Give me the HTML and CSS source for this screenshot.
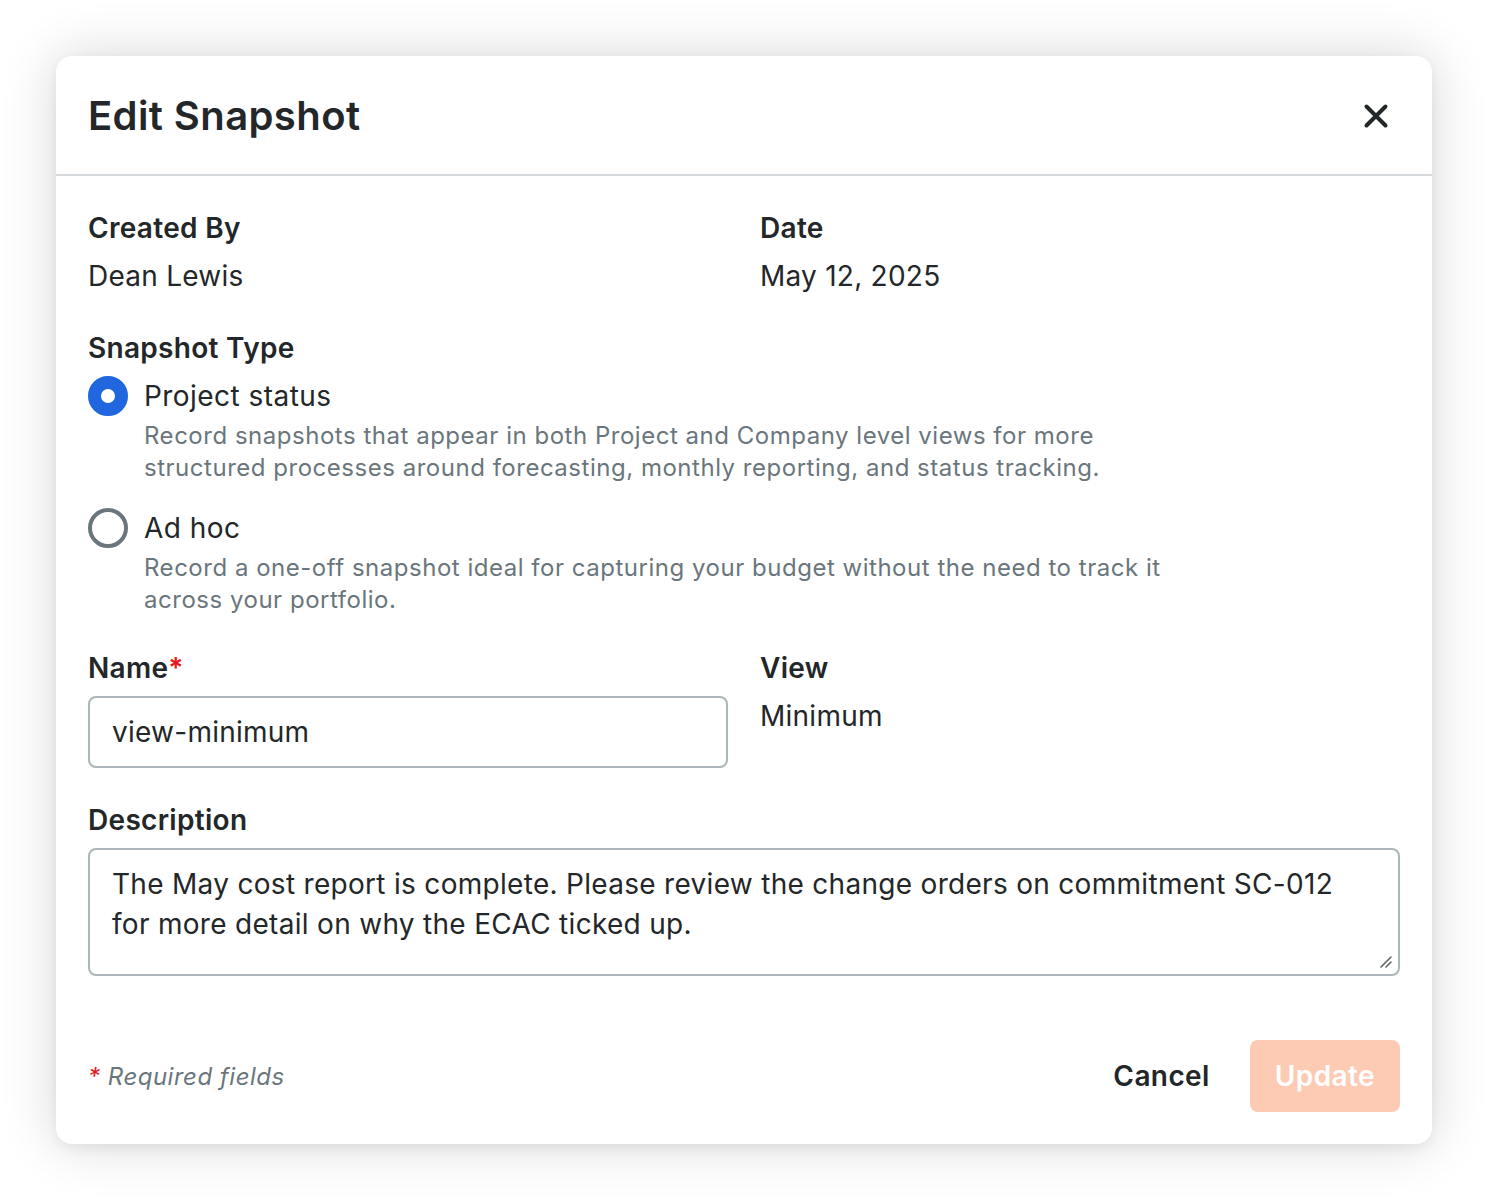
FILE: index.html
```html
<!DOCTYPE html>
<html lang="en">
<head>
<meta charset="utf-8">
<title>Edit Snapshot</title>
<link rel="stylesheet" href="styles.css">
</head>
<body>
<div class="modal">
  <header class="modal-header">
    <h1 class="modal-title">Edit Snapshot</h1>
    <button class="close-btn" aria-label="Close">
      <svg width="26" height="26" viewBox="0 0 26 26"><path d="M3.5 3.5 L22.5 22.5 M22.5 3.5 L3.5 22.5" stroke="#232729" stroke-width="4" stroke-linecap="round" fill="none"/></svg>
    </button>
  </header>
  <div class="modal-body">
    <div class="grid-2">
      <div class="field">
        <div class="label">Created By</div>
        <div class="value">Dean Lewis</div>
      </div>
      <div class="field">
        <div class="label">Date</div>
        <div class="value">May 12, 2025</div>
      </div>
    </div>

    <div class="field section">
      <div class="label">Snapshot Type</div>
      <div class="radio-group">
        <div class="radio-option">
          <span class="radio checked"></span>
          <div class="radio-text">
            <div class="radio-label">Project status</div>
            <div class="radio-desc">Record snapshots that appear in both Project and Company level views for more structured processes around forecasting, monthly reporting, and status tracking.</div>
          </div>
        </div>
        <div class="radio-option">
          <span class="radio"></span>
          <div class="radio-text">
            <div class="radio-label">Ad hoc</div>
            <div class="radio-desc">Record a one-off snapshot ideal for capturing your budget without the need to track it across your portfolio.</div>
          </div>
        </div>
      </div>
    </div>

    <div class="grid-2 section">
      <div class="field">
        <div class="label">Name<span class="req">*</span></div>
        <div class="input">view-minimum</div>
      </div>
      <div class="field">
        <div class="label">View</div>
        <div class="value">Minimum</div>
      </div>
    </div>

    <div class="field section">
      <div class="label">Description</div>
      <div class="textarea">The May cost report is complete. Please review the change orders on commitment SC-012 for more detail on why the ECAC ticked up.
        <svg class="resize" width="14" height="14" viewBox="0 0 14 14"><path d="M13 3 L3 13 M13 8 L8 13" stroke="#5c666b" stroke-width="1.6" stroke-linecap="round"/></svg>
      </div>
    </div>
  </div>
  <footer class="modal-footer">
    <div class="required-note"><span class="req">*</span> Required fields</div>
    <div class="actions">
      <button class="btn btn-cancel">Cancel</button>
      <button class="btn btn-update">Update</button>
    </div>
  </footer>
</div>
</body>
</html>
```

FILE: styles.css
```css
* { box-sizing: border-box; }
html, body { margin: 0; padding: 0; background: #ffffff; }
body {
  font-family: Inter, "Noto Sans", "Liberation Sans", sans-serif;
  color: #232729;
  padding: 56px;
}
.modal {
  width: 1376px;
  height: 1088px;
  background: #fff;
  border-radius: 16px;
  box-shadow: 0 0 56px rgba(0, 0, 0, 0.16), 0 4px 12px rgba(0, 0, 0, 0.06);
  display: flex;
  flex-direction: column;
}
.modal-header {
  height: 120px;
  padding: 2px 32px 0;
  display: flex;
  align-items: center;
  justify-content: space-between;
  border-bottom: 2px solid #d6dadc;
}
.modal-title {
  margin: 0;
  font-size: 40px;
  font-weight: 600;
  line-height: 48px;
  letter-spacing: 0.4px;
}
.close-btn {
  width: 48px;
  height: 48px;
  border: none;
  background: transparent;
  padding: 0;
  display: flex;
  align-items: center;
  justify-content: center;
}
.modal-body {
  padding: 32px 32px 32px;
  display: flex;
  flex-direction: column;
}
.grid-2 {
  display: grid;
  grid-template-columns: 1fr 1fr;
  column-gap: 32px;
}
.section { margin-top: 32px; }
.field { display: flex; flex-direction: column; gap: 8px; }
.label {
  font-size: 28px;
  font-weight: 600;
  line-height: 40px;
  letter-spacing: 0.3px;
}
.value {
  font-size: 28px;
  line-height: 40px;
  font-weight: 400;
  letter-spacing: 0.25px;
}
.req { color: #e61920; }
.radio-group {
  display: flex;
  flex-direction: column;
  gap: 24px;
}
.radio-option {
  display: flex;
  gap: 16px;
  align-items: flex-start;
}
.radio {
  width: 40px;
  height: 40px;
  border-radius: 50%;
  border: 4px solid #6a767c;
  flex: none;
}
.radio.checked {
  border: 13px solid #2066df;
}
.radio-label {
  font-size: 28px;
  line-height: 40px;
  letter-spacing: 0.45px;
}
.radio-desc {
  margin-top: 4px;
  font-size: 24px;
  line-height: 32px;
  color: #6a767c;
  letter-spacing: 0.52px;
  max-width: 1050px;
}
.input {
  height: 72px;
  border: 2px solid #acb5b9;
  border-radius: 8px;
  padding: 14px 22px;
  font-size: 28px;
  line-height: 40px;
  letter-spacing: 0.25px;
}
.textarea {
  position: relative;
  height: 128px;
  border: 2px solid #acb5b9;
  border-radius: 8px;
  padding: 14px 40px 14px 22px;
  font-size: 28px;
  line-height: 40px;
  letter-spacing: 0.3px;
}
.resize {
  position: absolute;
  right: 6px;
  bottom: 6px;
}
.modal-footer {
  margin-top: auto;
  padding: 0 32px 32px;
  display: flex;
  align-items: center;
  justify-content: space-between;
}
.required-note {
  font-size: 24px;
  font-style: italic;
  color: #6a767c;
  letter-spacing: 0.5px;
}
.actions {
  display: flex;
  align-items: center;
  gap: 16px;
}
.btn {
  font-family: inherit;
  height: 72px;
  border: none;
  border-radius: 8px;
  font-size: 28px;
  font-weight: 600;
  padding: 0 24px;
  background: transparent;
  letter-spacing: 0.4px;
}
.btn-cancel { color: #232729; }
.btn-update {
  background: #fdcab4;
  color: #ffffff;
  padding: 0 25px;
}
```
